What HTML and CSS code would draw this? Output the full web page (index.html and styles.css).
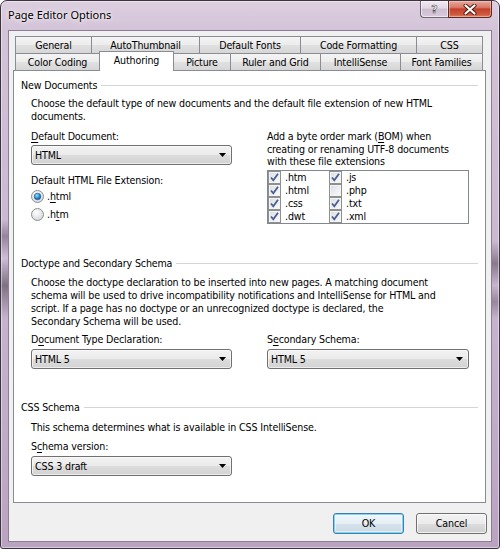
FILE: index.html
```html
<!DOCTYPE html>
<html>
<head>
<meta charset="utf-8">
<title>Page Editor Options</title>
<link rel="stylesheet" href="styles.css">
</head>
<body>
<div class="window">
  <div class="titlebar">
    <span class="title">Page Editor Options</span>
    <div class="caption-btns">
      <div class="cap-help"><span>?</span></div>
      <div class="cap-close">
        <svg width="14" height="11" viewBox="0 0 14 11"><path d="M2.5 1.5 L11.5 9.5 M11.5 1.5 L2.5 9.5" stroke="#4a1a10" stroke-width="4" stroke-linecap="round"/><path d="M2.5 1.5 L11.5 9.5 M11.5 1.5 L2.5 9.5" stroke="#fff" stroke-width="2.2" stroke-linecap="round"/></svg>
      </div>
    </div>
  </div>
  <div class="client">
    <div class="tabs">
      <div class="tabrow">
        <div class="tab t-general">General</div>
        <div class="tab t-autothumb">AutoThumbnail</div>
        <div class="tab t-fonts">Default Fonts</div>
        <div class="tab t-code">Code Formatting</div>
        <div class="tab t-css">CSS</div>
      </div>
      <div class="tabrow">
        <div class="tab t-color">Color Coding</div>
        <div class="tab t-authoring selected">Authoring</div>
        <div class="tab t-picture">Picture</div>
        <div class="tab t-ruler">Ruler and Grid</div>
        <div class="tab t-intelli">IntelliSense</div>
        <div class="tab t-families">Font Families</div>
      </div>
    </div>
    <div class="panel">
      <div class="group-head g1">New Documents</div>
      <p class="para p1">Choose the default type of new documents and the default file extension of new HTML<br>documents.</p>
      <div class="cols cols1">
        <div class="col">
          <div class="label"><u>D</u>efault Document:</div>
          <div class="select"><span>HTML</span><svg class="arrow" width="7" height="4" viewBox="0 0 7 4"><path d="M0 0 H7 L3.5 4 Z" fill="#000"/></svg></div>
          <div class="label lbl-ext">Default HTML File Extension:</div>
          <div class="radio-row">
            <svg class="radio" width="13" height="13" viewBox="0 0 13 13"><defs><radialGradient id="rg1" cx="0.4" cy="0.35" r="0.7"><stop offset="0" stop-color="#ffffff"/><stop offset="1" stop-color="#d4d6d9"/></radialGradient><radialGradient id="dot" cx="0.4" cy="0.35" r="0.7"><stop offset="0" stop-color="#9be0ff"/><stop offset="0.55" stop-color="#2a8fd6"/><stop offset="1" stop-color="#0d4f8c"/></radialGradient></defs><circle cx="6.5" cy="6.5" r="6" fill="url(#rg1)" stroke="#8e8f8f"/><circle cx="6.5" cy="6.5" r="3.3" fill="url(#dot)" stroke="#1f5b8e" stroke-width="0.6"/></svg>
            <span>.<u>h</u>tml</span>
          </div>
          <div class="radio-row">
            <svg class="radio" width="13" height="13" viewBox="0 0 13 13"><defs><radialGradient id="rg2" cx="0.4" cy="0.35" r="0.7"><stop offset="0" stop-color="#ffffff"/><stop offset="1" stop-color="#d4d6d9"/></radialGradient></defs><circle cx="6.5" cy="6.5" r="6" fill="url(#rg2)" stroke="#8e8f8f"/></svg>
            <span>.h<u>t</u>m</span>
          </div>
        </div>
        <div class="col">
          <div class="bom-text">Add a byte order mark (<u>B</u>OM) when<br>creating or renaming UTF-8 documents<br>with these file extensions</div>
          <div class="checklist">
            <div class="chk on">.htm</div>
            <div class="chk on">.js</div>
            <div class="chk on">.html</div>
            <div class="chk">.php</div>
            <div class="chk on">.css</div>
            <div class="chk on">.txt</div>
            <div class="chk on">.dwt</div>
            <div class="chk on">.xml</div>
          </div>
        </div>
      </div>

      <div class="group-head g2">Doctype and Secondary Schema</div>
      <p class="para p2">Choose the doctype declaration to be inserted into new pages. A matching document<br>schema will be used to drive incompatibility notifications and IntelliSense for HTML and<br>script. If a page has no doctype or an unrecognized doctype is declared, the<br>Secondary Schema will be used.</p>
      <div class="cols cols2">
        <div class="col">
          <div class="label">D<u>o</u>cument Type Declaration:</div>
          <div class="select sel2"><span>HTML 5</span><svg class="arrow" width="7" height="4" viewBox="0 0 7 4"><path d="M0 0 H7 L3.5 4 Z" fill="#000"/></svg></div>
        </div>
        <div class="col">
          <div class="label">S<u>e</u>condary Schema:</div>
          <div class="select sel2"><span>HTML 5</span><svg class="arrow" width="7" height="4" viewBox="0 0 7 4"><path d="M0 0 H7 L3.5 4 Z" fill="#000"/></svg></div>
        </div>
      </div>

      <div class="group-head g3">CSS Schema</div>
      <p class="para p3">This schema determines what is available in CSS IntelliSense.</p>
      <div class="cols cols3">
        <div class="col">
          <div class="label lbl-schema">S<u>c</u>hema version:</div>
          <div class="select sel2"><span>CSS 3 draft</span><svg class="arrow" width="7" height="4" viewBox="0 0 7 4"><path d="M0 0 H7 L3.5 4 Z" fill="#000"/></svg></div>
        </div>
      </div>
    </div>
    <div class="buttons">
      <div class="btn default">OK</div>
      <div class="btn">Cancel</div>
    </div>
  </div>
</div>
</body>
</html>
```
FILE: styles.css
```css
html, body {
  margin: 0;
  padding: 0;
  background: #ffffff;
}
body {
  font-family: "DejaVu Sans Condensed", "DejaVu Sans", sans-serif;
  font-size: 10.6px;
  letter-spacing: -0.15px;
  color: #000;
}
u { text-decoration-thickness: 1px; text-underline-offset: 2px; }

.window {
  width: 500px;
  height: 549px;
  box-sizing: border-box;
  border: 1px solid #3b3340;
  border-radius: 7px 7px 3px 3px;
  background:
    linear-gradient(180deg, transparent 40%, rgba(50,35,55,0.35) 43%, rgba(230,220,235,0.2) 47%, rgba(40,30,45,0.45) 52%, transparent 58%) left top / 7px 100% no-repeat,
    linear-gradient(180deg, transparent 44%, rgba(40,30,45,0.4) 48%, transparent 52%, rgba(40,30,45,0.3) 55%, transparent 58%) right top / 7px 100% no-repeat,
    linear-gradient(180deg, #dccfdf 0%, #d3c2d8 6%, #cbb8d1 40%, #c2adc9 75%, #b9a3c1 100%);
  box-shadow: inset 0 0 0 1px rgba(255,255,255,0.45);
  padding: 0 7px 6px 7px;
  display: flex;
  flex-direction: column;
  overflow: hidden;
}

.titlebar {
  height: 29px;
  display: flex;
  justify-content: space-between;
  align-items: flex-start;
  flex: none;
}
.title {
  font-family: "Noto Sans", "Open Sans", sans-serif;
  font-size: 11px;
  letter-spacing: 0;
  line-height: 16px;
  margin-top: 6px;
  color: #000;
  text-shadow: 0 0 6px rgba(255,255,255,0.95), 0 0 3px rgba(255,255,255,0.9);
}
.caption-btns {
  display: flex;
  height: 17px;
}
.cap-help {
  width: 28px;
  height: 17px;
  box-sizing: border-box;
  border: 1px solid #6f6574;
  border-top: none;
  border-right: none;
  border-radius: 0 0 0 4px;
  background: linear-gradient(180deg, #f1eaf2 0%, #e2d6e5 45%, #cdbdd2 50%, #d8c9dc 100%);
  box-shadow: inset 0 0 0 1px rgba(255,255,255,0.55);
  display: flex;
  align-items: center;
  justify-content: center;
}
.cap-help span {
  font-family: "DejaVu Sans", sans-serif;
  font-weight: bold;
  font-size: 11px;
  letter-spacing: 0;
  color: #fff;
  line-height: 11px;
  -webkit-text-stroke: 0.6px #555;
}
.cap-close {
  width: 44px;
  height: 17px;
  box-sizing: border-box;
  border: 1px solid #5a2a24;
  border-top: none;
  border-radius: 0 0 4px 0;
  background: linear-gradient(180deg, #e9a99a 0%, #d9776a 40%, #c3402a 50%, #cf5a3e 85%, #e0866a 100%);
  box-shadow: inset 0 0 0 1px rgba(255,220,210,0.45);
  display: flex;
  align-items: center;
  justify-content: center;
}

.client {
  flex: 1;
  background: #f0f0f0;
  border: 1px solid #8d7f93;
  display: flex;
  flex-direction: column;
}

.tabs {
  margin: 5px 0 0 6px;
  height: 34px;
  display: flex;
  flex-direction: column;
}
.tabrow {
  display: flex;
  height: 17px;
}
.tab {
  height: 17px;
  box-sizing: border-box;
  border: 1px solid #898c95;
  border-bottom: none;
  background: linear-gradient(180deg, #f4f4f4 0%, #ececec 50%, #e1e1e1 51%, #d6d6d6 100%);
  text-align: center;
  line-height: 16px;
  margin-left: -1px;
  white-space: nowrap;
}
.tab:first-child { margin-left: 0; }
.tab.selected {
  background: #ffffff;
  height: 20px;
  margin-top: -2px;
  line-height: 17px;
  position: relative;
  z-index: 2;
}
.t-general { width: 77px; }
.t-autothumb { width: 109px; }
.t-fonts { width: 102px; }
.t-code { width: 117px; }
.t-css { width: 67px; }
.t-color { width: 85px; }
.t-authoring { width: 75px; }
.t-picture { width: 58px; }
.t-ruler { width: 91px; }
.t-intelli { width: 81px; }
.t-families { width: 83px; }

.panel {
  margin: 0 5px 0 4px;
  height: 433px;
  box-sizing: border-box;
  border: 1px solid #898c95;
  background: #ffffff;
  padding: 0 7px;
  position: relative;
  z-index: 1;
}

.group-head {
  display: flex;
  align-items: center;
  height: 13px;
  line-height: 13px;
  white-space: nowrap;
}
.group-head::after {
  content: "";
  flex: 1;
  height: 0;
  border-top: 1px solid #d5d5d5;
  margin-left: 4px;
}
.g1 { margin-top: 8px; }
.g2 { margin-top: 33px; }
.g3 { margin-top: 32px; }

.para {
  margin: 0 0 0 10px;
  line-height: 13px;
  white-space: nowrap;
}
.p1 { margin-top: 5px; }
.p2 { margin-top: 6px; }
.p3 { margin-top: 7px; }

.cols {
  display: grid;
  grid-template-columns: 201px 202px;
  column-gap: 35px;
  margin-left: 10px;
}
.cols1 { margin-top: 7px; }
.cols2 { margin-top: 5px; }
.cols3 { margin-top: 6px; }

.label {
  line-height: 13px;
  height: 13px;
  white-space: nowrap;
}
.lbl-ext { margin-top: 9px; }

.select {
  margin-top: 2px;
  height: 20px;
  box-sizing: border-box;
  border: 1px solid #707070;
  border-radius: 3px;
  background: linear-gradient(180deg, #f2f2f2 0%, #ebebeb 50%, #dddddd 51%, #d2d2d2 100%);
  box-shadow: inset 0 0 0 1px rgba(255,255,255,0.6);
  display: flex;
  align-items: center;
  justify-content: space-between;
  padding: 0 5px 0 3px;
}
.sel2 { margin-top: 3px; }
.arrow { display: block; }

.radio-row {
  height: 18px;
  display: flex;
  align-items: center;
}
.radio { display: block; margin-right: 3px; }

.bom-text {
  line-height: 12.5px;
  white-space: nowrap;
}
.checklist {
  margin-top: 2.5px;
  border: 1px solid #828790;
  background: #fff;
  display: grid;
  grid-template-columns: 61px 1fr;
  grid-auto-rows: 13px;
}
.chk {
  display: flex;
  align-items: center;
  line-height: 13px;
}
.chk::before {
  content: "";
  width: 11px;
  height: 11px;
  flex: none;
  margin-right: 4px;
  border: 1px solid #8e8f8f;
  background: linear-gradient(135deg, #d9dde3 0%, #eef0f3 60%, #fbfbfb 100%);
  box-shadow: inset 0 0 0 1px #f4f4f4;
}
.chk.on::before {
  background:
    url("data:image/svg+xml;utf8,<svg xmlns='http://www.w3.org/2000/svg' width='11' height='11' viewBox='0 0 11 11'><path d='M2 5.5 L4.3 8.3 L9 1.8' fill='none' stroke='%234a5f90' stroke-width='1.8'/></svg>") center/11px 11px no-repeat,
    linear-gradient(135deg, #d9dde3 0%, #eef0f3 60%, #fbfbfb 100%);
}

.buttons {
  display: flex;
  justify-content: flex-end;
  gap: 12px;
  margin: 10px 4px 0 0;
}
.btn {
  width: 71px;
  height: 21px;
  box-sizing: border-box;
  border: 1px solid #707070;
  border-radius: 3px;
  background: linear-gradient(180deg, #f2f2f2 0%, #ebebeb 50%, #dddddd 51%, #cfcfcf 100%);
  box-shadow: inset 0 0 0 1px rgba(255,255,255,0.7);
  text-align: center;
  line-height: 19px;
}
.btn.default {
  border-color: #3c7fb1;
  box-shadow: inset 0 0 0 1px #7fd3f5, inset 0 0 0 2px rgba(255,255,255,0.5);
  background: linear-gradient(180deg, #eef6fb 0%, #e6eff5 50%, #d6e3ec 51%, #cad9e4 100%);
}
```
